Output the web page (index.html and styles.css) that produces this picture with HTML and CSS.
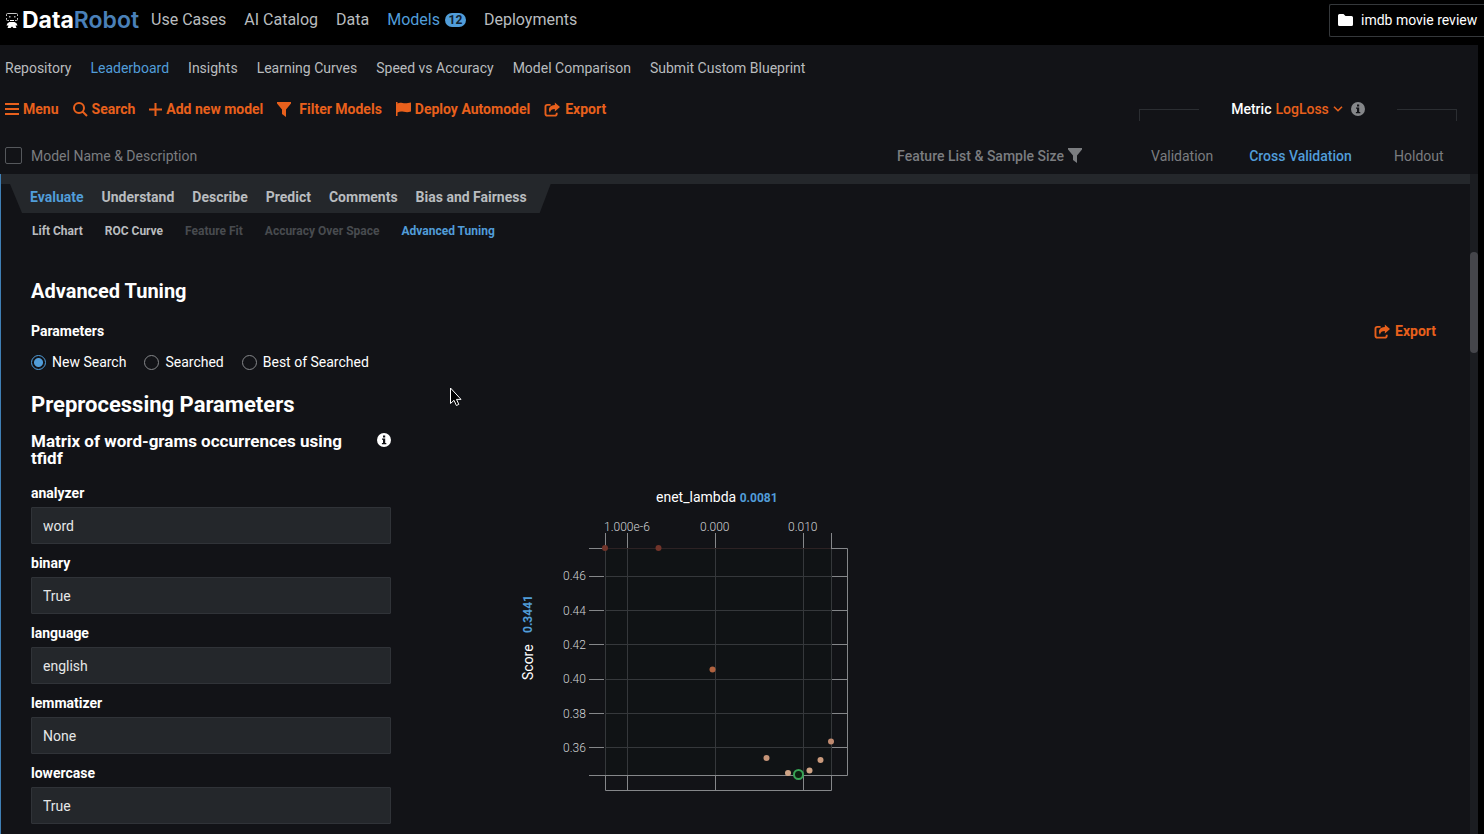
FILE: index.html
```html
<!DOCTYPE html>
<html lang="en">
<head>
    <meta charset="UTF-8">
    <title>DataRobot - Leaderboard</title>
    <link rel="stylesheet" href="styles.css">
</head>
<body>
    <!-- shared icons -->
    <svg class="defs" width="0" height="0">
        <symbol id="i-export" viewBox="0 0 18 16">
            <path d="M7 3H3.500Q1.500 3 1.500 5v7.500q0 2 2 2h8q2 0 2-2V11.500" fill="none" stroke="currentColor" stroke-width="2"/>
            <path d="M11.500 0.500l5.500 4.800-5.500 4.800V7.400C8.500 7.400 6.800 8.200 6.300 11.400 3.600 7.600 6 3.200 11.500 3.200z"/>
        </symbol>
        <symbol id="i-filter" viewBox="0 0 14 15">
            <path d="M0 0h14v1.500L9 7.500V15L5 12V7.500L0 1.500z"/>
        </symbol>
        <symbol id="i-info" viewBox="0 0 14 14">
            <circle cx="7" cy="7" r="7"/>
            <path d="M6 2.500h2.200v2H6zM5 5.500h3.200v4.500H9.300v1.300H4.900V10H6V6.800H5z" fill="#121317"/>
        </symbol>
    </svg>

    <header class="topbar">
        <a class="logo" href="#">
            <svg width="15" height="17" viewBox="0 0 15 17">
                <path d="M1.500 4V2.500q0-1 1-1h9q1 0 1 1V4M1.500 6v1.500q0 1 1 1H4M12.500 6v1.500q0 1-1 1H10" fill="none" stroke="#c8c8c8"/>
                <path d="M4 4h1.500v1.500H4zM9 4h1.500v1.500H9z" fill="#aaa"/>
                <path d="M5 8h4v1H5zM4.500 10h5q2.500.5 3 3.500h-2l1 2.500H8.500L7 14.500 5.500 16H2.500l1-2.500h-2q.5-3 3-3.500z" fill="#fff"/>
            </svg>
            <span class="logo-data">Data</span><span class="logo-robot">Robot</span>
        </a>
        <nav class="topnav">
            <a href="#">Use Cases</a>
            <a href="#">AI Catalog</a>
            <a href="#">Data</a>
            <a href="#" class="current">Models <span class="badge">12</span></a>
            <a href="#">Deployments</a>
        </nav>
        <button class="project" type="button">
            <svg width="15" height="12" viewBox="0 0 15 12"><path d="M1.500 0h4l2 2h6Q15 2 15 3.500v7q0 1.500-1.500 1.500h-12Q0 12 0 10.500v-9Q0 0 1.500 0z"/></svg>
            imdb movie review
        </button>
    </header>

    <main class="page">
        <nav class="subnav">
            <a href="#">Repository</a>
            <a href="#" class="current">Leaderboard</a>
            <a href="#">Insights</a>
            <a href="#">Learning Curves</a>
            <a href="#">Speed vs Accuracy</a>
            <a href="#">Model Comparison</a>
            <a href="#">Submit Custom Blueprint</a>
        </nav>

        <div class="toolbar">
            <div class="actions">
                <button class="action" type="button">
                    <svg width="14" height="12" viewBox="0 0 14 12"><path d="M0 0h14v2H0zM0 5h14v2H0zM0 10h14v2H0z"/></svg>
                    Menu
                </button>
                <button class="action" type="button">
                    <svg width="15" height="15" viewBox="0 0 15 15"><path d="M10 10l4 4M11 6A5 5 0 1 1 1 6 5 5 0 1 1 11 6z" fill="none" stroke="currentColor" stroke-width="2"/></svg>
                    Search
                </button>
                <button class="action" type="button">
                    <svg width="13" height="13" viewBox="0 0 13 13"><path d="M5.500 0h2v5.500H13v2H7.500V13h-2V7.500H0v-2h5.500z"/></svg>
                    Add new model
                </button>
                <button class="action filter" type="button">
                    <svg width="14" height="15"><use href="#i-filter"/></svg>
                    Filter Models
                </button>
                <button class="action" type="button">
                    <svg width="15" height="14" viewBox="0 0 15 14"><path d="M0 0h1.500v1.500C5-.5 7 2.500 15 0.500v9C9 11.500 6 8 1.500 10.500V14H0z"/></svg>
                    Deploy Automodel
                </button>
                <button class="action" type="button">
                    <svg width="17" height="15"><use href="#i-export"/></svg>
                    Export
                </button>
            </div>
            <div class="metric">
                <span class="bracket"></span>
                <div class="metric-value">
                    Metric
                    <button class="action drop" type="button">
                        LogLoss
                        <svg width="10" height="6" viewBox="0 0 10 6"><path d="M1 .7l4 4 4-4" fill="none" stroke="currentColor" stroke-width="1.600"/></svg>
                    </button>
                    <svg class="info muted" width="14" height="14"><use href="#i-info"/></svg>
                </div>
                <span class="bracket right"></span>
            </div>
        </div>

        <div class="list-head">
            <label class="name-col"><input type="checkbox"> Model Name &amp; Description</label>
            <div class="feature-col">Feature List &amp; Sample Size <svg width="14" height="15"><use href="#i-filter"/></svg></div>
            <div class="scores">
                <a href="#">Validation</a>
                <a href="#" class="current">Cross Validation</a>
                <a href="#">Holdout</a>
            </div>
        </div>

        <div class="scroller">
            <section class="model">
                <div class="strip"></div>
                <nav class="tabs">
                    <a href="#" class="current">Evaluate</a>
                    <a href="#">Understand</a>
                    <a href="#">Describe</a>
                    <a href="#">Predict</a>
                    <a href="#">Comments</a>
                    <a href="#">Bias and Fairness</a>
                </nav>
                <nav class="subtabs">
                    <a href="#">Lift Chart</a>
                    <a href="#">ROC Curve</a>
                    <a href="#" class="disabled">Feature Fit</a>
                    <a href="#" class="disabled">Accuracy Over Space</a>
                    <a href="#" class="current">Advanced Tuning</a>
                </nav>

                <div class="tuning">
                    <h2>Advanced Tuning</h2>
                    <div class="params-head">
                        <h4>Parameters</h4>
                        <button class="action" type="button">
                            <svg width="17" height="15"><use href="#i-export"/></svg>
                            Export
                        </button>
                    </div>
                    <div class="radios">
                        <label><input type="radio" name="search" checked> New Search</label>
                        <label><input type="radio" name="search"> Searched</label>
                        <label><input type="radio" name="search"> Best of Searched</label>
                    </div>

                    <div class="columns">
                        <form class="params">
                            <h2 class="big">Preprocessing Parameters</h2>
                            <div class="task">
                                <h3>Matrix of word-grams occurrences using tfidf</h3>
                                <svg class="info" width="14" height="14"><use href="#i-info"/></svg>
                            </div>
                            <label for="analyzer">analyzer</label>
                            <input type="text" id="analyzer" value="word">
                            <label for="binary">binary</label>
                            <input type="text" id="binary" value="True">
                            <label for="language">language</label>
                            <input type="text" id="language" value="english">
                            <label for="lemmatizer">lemmatizer</label>
                            <input type="text" id="lemmatizer" value="None">
                            <label for="lowercase">lowercase</label>
                            <input type="text" id="lowercase" value="True">
                        </form>

                        <svg class="chart" width="340" height="310" viewBox="520 485 340 310">
                            <text class="axis-title" x="656" y="502">enet_lambda <tspan class="best">0.0081</tspan></text>
                            <text class="axis-title" transform="translate(533 680) rotate(-90)">Score</text>
                            <text class="axis-title best" transform="translate(532 633) rotate(-90)">0.3441</text>

                            <rect x="605" y="548" width="226" height="227" fill="#101315"/>
                            <!-- grid -->
                            <path class="grid" d="M605.500 548V775M627.500 548V775M715.500 548V775M803.500 548V775M831.500 548V775M605 576.500H831M605 610.500H831M605 644.500H831M605 679.500H831M605 713.500H831M605 747.500H831"/>
                            <path d="M605 548.500H831" stroke="#2d2224"/>
                            <!-- ticks and outer frame -->
                            <path class="ticks" d="M605.500 533V548M627.500 533V548M715.500 533V548M803.500 533V548M831.500 533V548M589 548.500H604M589 576.500H604M589 610.500H604M589 644.500H604M589 679.500H604M589 713.500H604M589 747.500H604M831 548.500H847.500V775.500H589M832 576.500H847M832 610.500H847M832 644.500H847M832 679.500H847M832 713.500H847M832 747.500H847M605.500 775V790.500H831.500V775M627.500 775V790M715.500 775V790M803.500 775V790"/>
                            <g class="tick-text">
                                <text x="604" y="531">1.000e-6</text>
                                <text x="700" y="531">0.000</text>
                                <text x="788" y="531">0.010</text>
                                <text x="563" y="580">0.46</text>
                                <text x="563" y="615">0.44</text>
                                <text x="563" y="649">0.42</text>
                                <text x="563" y="683">0.40</text>
                                <text x="563" y="718">0.38</text>
                                <text x="563" y="752">0.36</text>
                            </g>
                            <circle cx="605" cy="548" r="3" fill="#71342a"/>
                            <circle cx="658.500" cy="548" r="3" fill="#71342a"/>
                            <circle cx="712.500" cy="669.500" r="3" fill="#b0623f"/>
                            <circle cx="766.500" cy="758" r="3" fill="#c59478"/>
                            <circle cx="788" cy="773" r="3" fill="#cfa486"/>
                            <circle cx="809.500" cy="770.500" r="3" fill="#cfa486"/>
                            <circle cx="820.500" cy="760" r="3" fill="#c99a7c"/>
                            <circle cx="831" cy="741.500" r="3" fill="#c08a70"/>
                            <circle cx="798.500" cy="774.500" r="4.500" fill="#0b1f10" stroke="#37a355" stroke-width="2"/>
                        </svg>
                    </div>
                </div>
            </section>
            <div class="scrollbar"><div class="thumb"></div></div>
        </div>
    </main>

    <svg class="cursor" width="14" height="20" viewBox="0 0 14 20">
        <path d="M1.500 1v15.500l3.500-3.200 2.400 5.200 2.400-1.100-2.300-5H12z" fill="#000" stroke="#fff"/>
    </svg>
</body>
</html>
```
FILE: styles.css
```css
* {
    box-sizing: border-box;
    margin: 0;
    padding: 0;
}

body {
    display: flex;
    flex-direction: column;
    height: 100vh;
    overflow: hidden;
    background: #000;
    color: #fff;
    font: 14px/20px Roboto, "Liberation Sans", sans-serif;
}

a {
    color: #b9bcbf;
    text-decoration: none;
}

button {
    background: none;
    border: 0;
    font: inherit;
    cursor: pointer;
}

svg {
    fill: currentColor;
    flex: none;
}

a.current {
    color: #519dd9;
}

.defs {
    position: absolute;
}

/* top bar */
.topbar {
    display: flex;
    align-items: center;
    height: 45px;
    padding: 0 0 5px 5px;
    flex: none;
    white-space: nowrap;
}

.logo {
    display: flex;
    align-items: center;
    font: 700 23px/24px Inter, sans-serif;
    color: #fff;
}

.logo svg {
    margin-right: 2px;
}

.logo-robot {
    color: #4a80b8;
    font-weight: 600;
}

.topnav {
    display: flex;
    gap: 18px;
    margin-left: 12px;
    font-size: 16px;
}

.topnav .current {
    display: flex;
    align-items: center;
    gap: 5px;
}

.badge {
    width: 21px;
    border-radius: 7px;
    background: #519dd9;
    color: #10202f;
    font-size: 12px;
    line-height: 14px;
    font-weight: 700;
    text-align: center;
}

.project {
    display: flex;
    align-items: center;
    gap: 8px;
    width: 155px;
    height: 33px;
    margin-left: auto;
    padding-left: 8px;
    border: 1px solid #35383b;
    border-right: 0;
    border-radius: 2px 0 0 2px;
    color: #fff;
}

/* leaderboard header */
.page {
    display: flex;
    flex-direction: column;
    flex: 1;
    min-height: 0;
    margin-right: 6px;
    background: #121317;
}

.subnav {
    display: flex;
    align-items: center;
    gap: 19px;
    height: 46px;
    padding-left: 5px;
}

.toolbar,
.list-head {
    display: flex;
    align-items: center;
    justify-content: space-between;
    flex: none;
}

.toolbar {
    height: 36px;
}

.actions {
    display: flex;
    gap: 14px;
    padding-left: 5px;
}

.action {
    display: flex;
    align-items: center;
    gap: 4px;
    color: #e8601c;
    font-weight: 700;
}

.action.filter {
    gap: 8px;
}

.metric {
    display: flex;
    justify-content: space-between;
    width: 355px;
    padding: 0 21px 0 16px;
}

.metric-value {
    display: flex;
    align-items: center;
    gap: 4px;
    font-weight: 500;
}

.action.drop {
    font-weight: 500;
}

.info.muted {
    margin-left: 4px;
    color: #85878a;
}

.bracket {
    width: 60px;
    height: 12px;
    margin-top: 11px;
    border: solid #2b2e32;
    border-width: 1px 0 0 1px;
}

.bracket.right {
    border-width: 1px 1px 0 0;
}

.list-head {
    height: 47px;
    padding-top: 10px;
    color: #7b7d80;
}

.name-col {
    display: flex;
    align-items: center;
    gap: 9px;
    padding-left: 5px;
}

.name-col input {
    appearance: none;
    width: 17px;
    height: 17px;
    border: 1px solid #55585c;
    border-radius: 2px;
}

.feature-col {
    display: flex;
    align-items: center;
    gap: 4px;
    margin: 0 41px 0 auto;
    font-weight: 500;
}

.scores {
    display: grid;
    grid-template-columns: repeat(3, 1fr);
    width: 355px;
    text-align: center;
}

.scores a {
    color: #7b7d80;
}

.scores a.current {
    color: #519dd9;
    font-weight: 500;
}

/* opened model */
.scroller {
    display: flex;
    flex: 1;
    min-height: 0;
}

.model {
    flex: 1;
    min-width: 0;
    border-left: 1px solid #3f7fb5;
    overflow: hidden;
}

.strip {
    height: 10px;
    background: #24272b;
}

.tabs {
    display: flex;
    align-items: center;
    gap: 18px;
    width: max-content;
    height: 29px;
    margin-left: 9px;
    padding: 0 24px 4px 20px;
    background: #24272b;
    clip-path: polygon(0 0, 100% 0, calc(100% - 11px) 100%, 12px 100%);
    font-weight: 700;
}

.subtabs {
    display: flex;
    gap: 22px;
    padding: 8px 0 0 31px;
    font-size: 12px;
    font-weight: 700;
}

.subtabs .disabled {
    color: #484b4f;
}

.tuning {
    padding: 36px 34px 0 30px;
}

h2 {
    font-size: 20px;
    line-height: 28px;
    font-weight: 700;
}

h2.big {
    font-size: 22px;
}

h3 {
    font-size: 17px;
    line-height: 17px;
    font-weight: 700;
}

h4 {
    font-size: 14px;
    font-weight: 700;
}

.params-head {
    display: flex;
    justify-content: space-between;
    margin-top: 16px;
}

.radios {
    display: flex;
    gap: 18px;
    margin-top: 11px;
}

.radios label {
    display: flex;
    align-items: center;
    gap: 6px;
}

.radios input {
    appearance: none;
    width: 15px;
    height: 15px;
    border: 1px solid #85878a;
    border-radius: 50%;
}

.radios input:checked {
    border-color: #519dd9;
    background: radial-gradient(circle, #519dd9 4px, transparent 5px);
}

.columns {
    display: flex;
    align-items: flex-start;
    gap: 129px;
    margin-top: 19px;
}

.params {
    width: 360px;
}

.task {
    display: flex;
    justify-content: space-between;
    margin: 14px 0 16px;
}

.task h3 {
    width: 320px;
}

.params label {
    display: block;
    padding-bottom: 4px;
    font-weight: 700;
}

.params input {
    display: block;
    width: 100%;
    height: 37px;
    margin-bottom: 9px;
    padding: 0 11px;
    border: 1px solid #303338;
    border-radius: 1px;
    background: #24272b;
    color: #e6e7e8;
    font: inherit;
}

.chart {
    margin-top: 94px;
}

.axis-title {
    fill: #fff;
    font-size: 14px;
}

.best {
    fill: #519dd9;
    font-size: 12px;
    font-weight: 700;
}

.tick-text {
    fill: #d0d2d4;
    font-size: 12px;
    font-weight: 300;
}

.grid {
    fill: none;
    stroke: #35383b;
}

.ticks {
    fill: none;
    stroke: #85878a;
}

.scrollbar {
    width: 8px;
    padding-top: 78px;
    background: #1b1d21;
}

.thumb {
    height: 101px;
    border-radius: 4px;
    background: #45464b;
}

.cursor {
    position: absolute;
    left: 449px;
    top: 387px;
}
```
